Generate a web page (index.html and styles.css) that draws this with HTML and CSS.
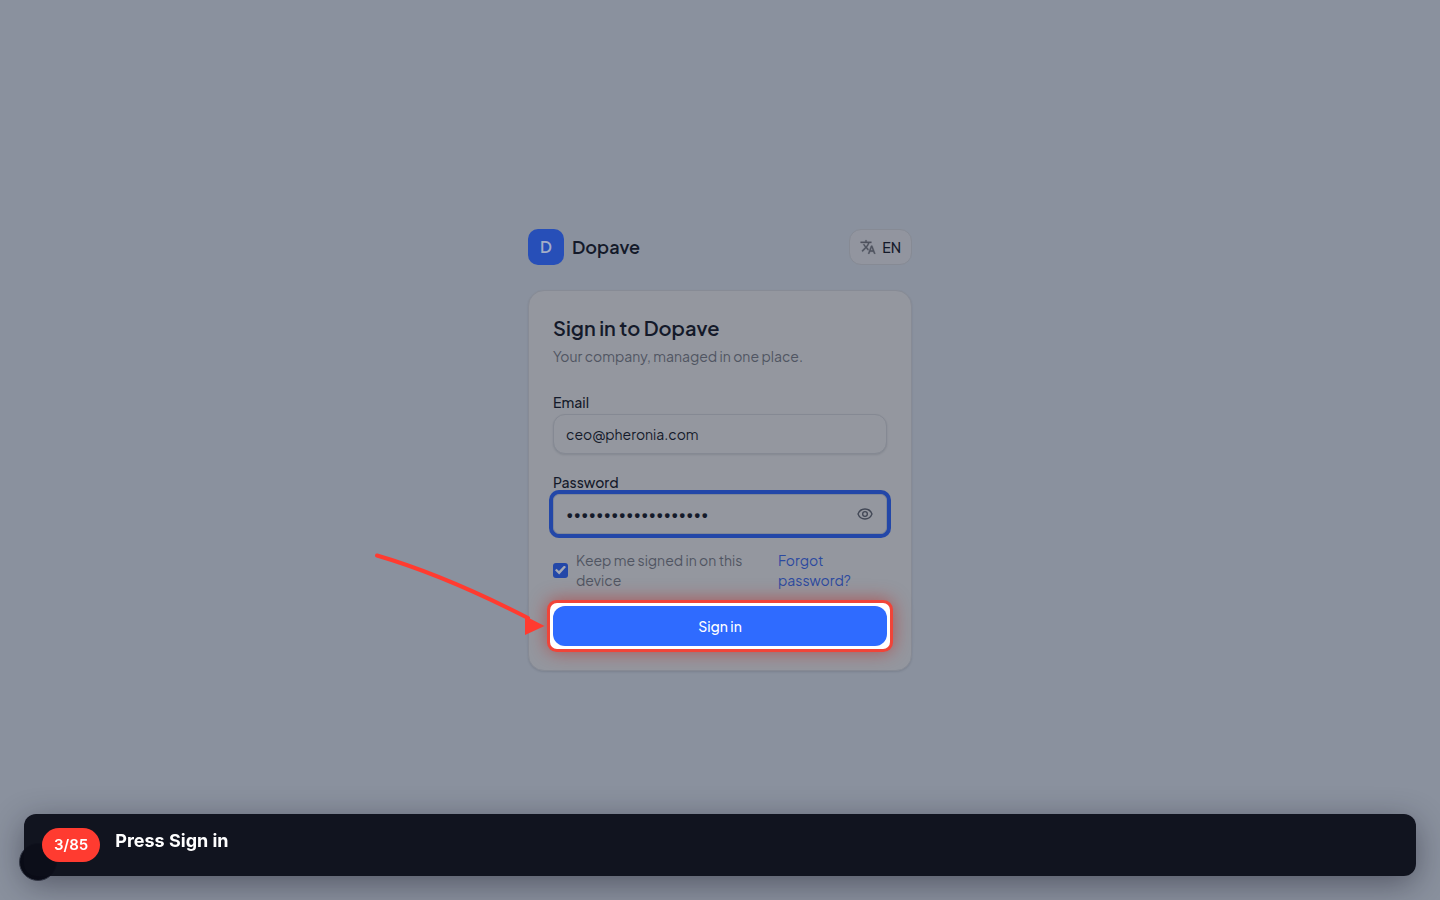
FILE: index.html
```html
<!DOCTYPE html>
<html lang="en">
<head>
<meta charset="utf-8">
<title>Sign in to Dopave</title>
<link rel="stylesheet" href="styles.css">
</head>
<body>
<main class="page">
  <div class="auth">
    <header class="topbar">
      <div class="brand"><span class="logo">D</span><span class="brand-name">Dopave</span></div>
      <button class="lang" type="button">
        <svg width="16" height="16" viewBox="0 0 24 24" fill="currentColor" stroke="currentColor" stroke-width=".5" aria-hidden="true"><path d="M12.87 15.07l-2.54-2.51.03-.03A17.5 17.5 0 0 0 14.07 6H17V4h-7V2H8v2H1v2h11.17C11.5 7.92 10.44 9.75 9 11.35 8.07 10.32 7.3 9.19 6.69 8h-2c.73 1.63 1.73 3.17 2.98 4.56l-5.09 5.02L4 19l5-5 3.11 3.11.76-2.04zM18.5 10h-2L12 22h2l1.12-3h4.75L21 22h2l-4.5-12zm-2.62 7l1.62-4.33L19.12 17h-3.24z"/></svg>
        EN
      </button>
    </header>
    <section class="card">
      <h1 class="title">Sign in to Dopave</h1>
      <p class="subtitle">Your company, managed in one place.</p>
      <form class="form">
        <label class="label" for="email">Email</label>
        <input class="input" id="email" type="email" value="ceo@pheronia.com">
        <label class="label label-next" for="password">Password</label>
        <div class="password">
          <input class="input input-active" id="password" type="password" value="correct-horse-12345">
          <button class="reveal" type="button" aria-label="Show password">
            <svg width="16" height="16" viewBox="0 0 24 24" fill="none" stroke="currentColor" stroke-width="2" stroke-linejoin="round" aria-hidden="true"><path d="M1.500 12C3.500 7 7.300 4.500 12 4.500S20.500 7 22.500 12C20.500 17 16.700 19.500 12 19.500S3.500 17 1.500 12z"/><circle cx="12" cy="12" r="3.500"/></svg>
          </button>
        </div>
        <div class="options">
          <label class="keep"><input class="check" type="checkbox" checked><span>Keep me signed in on this device</span></label>
          <a class="forgot" href="#">Forgot password?</a>
        </div>
        <div class="target">
          <button class="submit" type="button">Sign in</button>
          <svg class="arrow" width="180" height="90" viewBox="0 0 180 90" fill="none" aria-hidden="true"><path d="M10 9.500Q77 29 161 72" stroke="#ff3b30" stroke-width="4" stroke-linecap="round"/><path d="M158 70L177.500 80L158 89z" fill="#ff3b30"/></svg>
        </div>
      </form>
    </section>
  </div>
</main>
<div class="bubble"></div>
<aside class="step">
  <span class="count">3/85</span>
  <span class="step-title">Press Sign in</span>
</aside>
</body>
</html>
```

FILE: styles.css
```css
* { box-sizing: border-box; }
body {
  margin: 0;
  background: #8a919e;
  color: #141a2a;
  font: 14px/20px "Plus Jakarta Sans", Inter, sans-serif;
}
button, input { font: inherit; color: inherit; }
.page {
  min-height: 100vh;
  display: flex;
  align-items: center;
  justify-content: center;
}
.auth { width: 100%; max-width: 384px; }
.topbar {
  display: flex;
  align-items: center;
  justify-content: space-between;
  margin-bottom: 25px;
}
.brand { display: flex; align-items: center; gap: 8px; }
.logo {
  width: 36px;
  height: 36px;
  display: grid;
  place-items: center;
  border-radius: 10px;
  background: #274fb8;
  color: #a3adc7;
  font-size: 16px;
  font-weight: 600;
}
.brand-name { font-size: 18px; font-weight: 600; }
.lang {
  display: flex;
  align-items: center;
  gap: 6px;
  height: 36px;
  padding: 0 10px;
  border: 1px solid #868a94;
  border-radius: 12px;
  background: #92959f;
  font-weight: 500;
}
.lang svg { color: #4e535f; }
.card {
  padding: 24px;
  border: 1px solid #878b95;
  border-radius: 16px;
  background: #94979f;
  box-shadow: 0 1px 2px rgba(20, 26, 42, .12);
}
.title { margin: 0; font-size: 20px; line-height: 26px; font-weight: 600; }
.subtitle { margin: 5px 0 0; color: #505562; }
.form { margin-top: 24px; }
.label { display: block; line-height: 24px; font-weight: 500; }
.label-next { margin-top: 16px; }
.input {
  display: block;
  width: 100%;
  height: 40px;
  padding: 0 12px;
  border: 1px solid #858993;
  border-radius: 12px;
  background: #94979f;
  box-shadow: 0 1px 2px rgba(20, 26, 42, .12);
  outline: none;
}
.password { position: relative; }
.input-active {
  border-color: #7f8798;
  border-radius: 6px;
  box-shadow: 0 0 0 4px #2347a8;
}
.reveal {
  position: absolute;
  top: 0;
  right: 4px;
  width: 36px;
  height: 40px;
  padding: 0;
  display: grid;
  place-items: center;
  border: 0;
  background: none;
  color: #414755;
}
.options {
  display: grid;
  grid-template-columns: 1fr 109px;
  column-gap: 16px;
  margin: 16px 0;
}
.keep { display: flex; align-items: center; gap: 8px; color: #505562; }
.check {
  appearance: none;
  flex: none;
  width: 15px;
  height: 15px;
  margin: 0;
  border-radius: 3px;
  background: #2347a8;
  display: grid;
  place-items: center;
}
.check:checked::before {
  content: "";
  width: 11px;
  height: 9px;
  background: #a3a8b5;
  clip-path: polygon(0 52%, 14% 35%, 36% 62%, 84% 0, 100% 17%, 38% 100%);
}
.forgot { color: #2c4aa0; text-decoration: none; }
.target {
  position: relative;
  border-radius: 4px;
  background: #fff;
  box-shadow: 0 0 0 3px #fff, 0 0 0 6px #f04438, 0 0 18px 6px rgba(190, 40, 35, .6);
}
.submit {
  display: block;
  width: 100%;
  height: 40px;
  border: 0;
  border-radius: 12px;
  background: #2f6bff;
  color: #fff;
  font-weight: 500;
}
.arrow {
  position: absolute;
  right: calc(100% + 6px);
  bottom: 10px;
  pointer-events: none;
}
.bubble {
  position: fixed;
  left: 19px;
  bottom: 19px;
  width: 38px;
  height: 38px;
  border: 1px solid #3b404e;
  border-radius: 50%;
  background: #080a14;
}
.step {
  position: fixed;
  left: 24px;
  right: 24px;
  bottom: 24px;
  display: flex;
  align-items: flex-start;
  gap: 15px;
  padding: 14px 18px;
  border-radius: 12px;
  background: rgba(12, 15, 26, .96);
  box-shadow: 0 8px 32px rgba(20, 20, 35, .45);
  color: #fff;
  font-family: Inter, sans-serif;
}
.count {
  padding: 0 12px;
  border-radius: 17px;
  background: #ff3b30;
  font-size: 15px;
  line-height: 34px;
  font-weight: 600;
}
.step-title { font-size: 18px; line-height: 26px; font-weight: 700; }
```
